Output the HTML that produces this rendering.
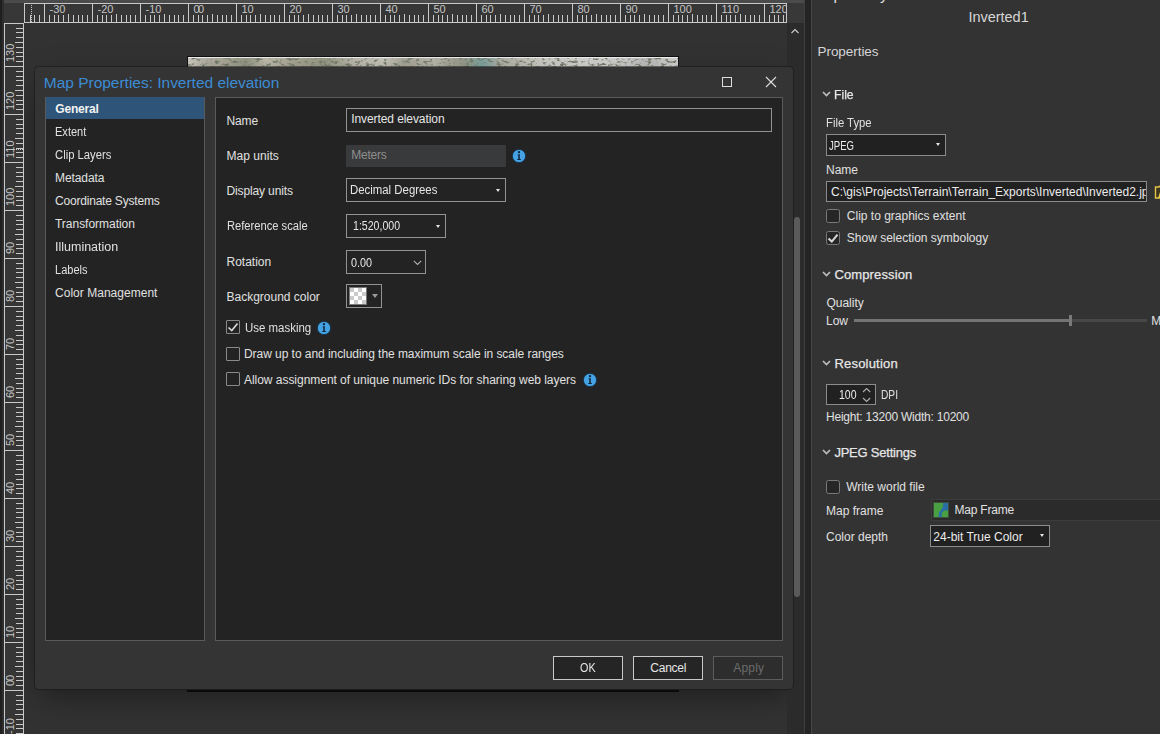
<!DOCTYPE html><html><head><meta charset="utf-8"><style>html,body{margin:0;padding:0;width:1160px;height:734px;overflow:hidden;background:#323232;position:relative}</style></head><body><div style="position:absolute;left:0px;top:0px;width:4px;height:734px;background:#1f1f1f"></div>
<div style="position:absolute;left:2px;top:0px;width:2px;height:734px;background:#2e2e2e"></div>
<div style="position:absolute;left:4px;top:0px;width:801px;height:3px;background:#4b4b4b"></div>
<div style="position:absolute;left:4px;top:3px;width:20px;height:20px;background:#373737"></div>
<svg style="position:absolute;left:24px;top:3px" width="763" height="20" shape-rendering="crispEdges"><rect x="0" y="0" width="763" height="20" fill="#363636"/><rect x="0" y="0" width="763" height="1" fill="#c9c9c9"/><rect x="0" y="19" width="763" height="1" fill="#c9c9c9"/><rect x="0" y="0" width="1" height="20" fill="#c9c9c9"/><rect x="762" y="0" width="1" height="20" fill="#c9c9c9"/><rect x="6" y="12" width="1" height="7" fill="#c9c9c9"/><rect x="10" y="12" width="1" height="7" fill="#c9c9c9"/><rect x="15" y="12" width="1" height="7" fill="#c9c9c9"/><rect x="20" y="0" width="1" height="20" fill="#c9c9c9"/><rect x="25" y="12" width="1" height="7" fill="#c9c9c9"/><rect x="30" y="12" width="1" height="7" fill="#c9c9c9"/><rect x="34" y="12" width="1" height="7" fill="#c9c9c9"/><rect x="39" y="12" width="1" height="7" fill="#c9c9c9"/><rect x="44" y="11" width="1" height="8" fill="#c9c9c9"/><rect x="49" y="12" width="1" height="7" fill="#c9c9c9"/><rect x="54" y="12" width="1" height="7" fill="#c9c9c9"/><rect x="58" y="12" width="1" height="7" fill="#c9c9c9"/><rect x="63" y="12" width="1" height="7" fill="#c9c9c9"/><rect x="68" y="0" width="1" height="20" fill="#c9c9c9"/><rect x="73" y="12" width="1" height="7" fill="#c9c9c9"/><rect x="78" y="12" width="1" height="7" fill="#c9c9c9"/><rect x="82" y="12" width="1" height="7" fill="#c9c9c9"/><rect x="87" y="12" width="1" height="7" fill="#c9c9c9"/><rect x="92" y="11" width="1" height="8" fill="#c9c9c9"/><rect x="97" y="12" width="1" height="7" fill="#c9c9c9"/><rect x="102" y="12" width="1" height="7" fill="#c9c9c9"/><rect x="106" y="12" width="1" height="7" fill="#c9c9c9"/><rect x="111" y="12" width="1" height="7" fill="#c9c9c9"/><rect x="116" y="0" width="1" height="20" fill="#c9c9c9"/><rect x="121" y="12" width="1" height="7" fill="#c9c9c9"/><rect x="126" y="12" width="1" height="7" fill="#c9c9c9"/><rect x="130" y="12" width="1" height="7" fill="#c9c9c9"/><rect x="135" y="12" width="1" height="7" fill="#c9c9c9"/><rect x="140" y="11" width="1" height="8" fill="#c9c9c9"/><rect x="145" y="12" width="1" height="7" fill="#c9c9c9"/><rect x="150" y="12" width="1" height="7" fill="#c9c9c9"/><rect x="154" y="12" width="1" height="7" fill="#c9c9c9"/><rect x="159" y="12" width="1" height="7" fill="#c9c9c9"/><rect x="164" y="0" width="1" height="20" fill="#c9c9c9"/><rect x="169" y="12" width="1" height="7" fill="#c9c9c9"/><rect x="174" y="12" width="1" height="7" fill="#c9c9c9"/><rect x="178" y="12" width="1" height="7" fill="#c9c9c9"/><rect x="183" y="12" width="1" height="7" fill="#c9c9c9"/><rect x="188" y="11" width="1" height="8" fill="#c9c9c9"/><rect x="193" y="12" width="1" height="7" fill="#c9c9c9"/><rect x="198" y="12" width="1" height="7" fill="#c9c9c9"/><rect x="202" y="12" width="1" height="7" fill="#c9c9c9"/><rect x="207" y="12" width="1" height="7" fill="#c9c9c9"/><rect x="212" y="0" width="1" height="20" fill="#c9c9c9"/><rect x="217" y="12" width="1" height="7" fill="#c9c9c9"/><rect x="222" y="12" width="1" height="7" fill="#c9c9c9"/><rect x="226" y="12" width="1" height="7" fill="#c9c9c9"/><rect x="231" y="12" width="1" height="7" fill="#c9c9c9"/><rect x="236" y="11" width="1" height="8" fill="#c9c9c9"/><rect x="241" y="12" width="1" height="7" fill="#c9c9c9"/><rect x="246" y="12" width="1" height="7" fill="#c9c9c9"/><rect x="250" y="12" width="1" height="7" fill="#c9c9c9"/><rect x="255" y="12" width="1" height="7" fill="#c9c9c9"/><rect x="260" y="0" width="1" height="20" fill="#c9c9c9"/><rect x="265" y="12" width="1" height="7" fill="#c9c9c9"/><rect x="270" y="12" width="1" height="7" fill="#c9c9c9"/><rect x="274" y="12" width="1" height="7" fill="#c9c9c9"/><rect x="279" y="12" width="1" height="7" fill="#c9c9c9"/><rect x="284" y="11" width="1" height="8" fill="#c9c9c9"/><rect x="289" y="12" width="1" height="7" fill="#c9c9c9"/><rect x="294" y="12" width="1" height="7" fill="#c9c9c9"/><rect x="298" y="12" width="1" height="7" fill="#c9c9c9"/><rect x="303" y="12" width="1" height="7" fill="#c9c9c9"/><rect x="308" y="0" width="1" height="20" fill="#c9c9c9"/><rect x="313" y="12" width="1" height="7" fill="#c9c9c9"/><rect x="318" y="12" width="1" height="7" fill="#c9c9c9"/><rect x="322" y="12" width="1" height="7" fill="#c9c9c9"/><rect x="327" y="12" width="1" height="7" fill="#c9c9c9"/><rect x="332" y="11" width="1" height="8" fill="#c9c9c9"/><rect x="337" y="12" width="1" height="7" fill="#c9c9c9"/><rect x="342" y="12" width="1" height="7" fill="#c9c9c9"/><rect x="346" y="12" width="1" height="7" fill="#c9c9c9"/><rect x="351" y="12" width="1" height="7" fill="#c9c9c9"/><rect x="356" y="0" width="1" height="20" fill="#c9c9c9"/><rect x="361" y="12" width="1" height="7" fill="#c9c9c9"/><rect x="366" y="12" width="1" height="7" fill="#c9c9c9"/><rect x="370" y="12" width="1" height="7" fill="#c9c9c9"/><rect x="375" y="12" width="1" height="7" fill="#c9c9c9"/><rect x="380" y="11" width="1" height="8" fill="#c9c9c9"/><rect x="385" y="12" width="1" height="7" fill="#c9c9c9"/><rect x="390" y="12" width="1" height="7" fill="#c9c9c9"/><rect x="394" y="12" width="1" height="7" fill="#c9c9c9"/><rect x="399" y="12" width="1" height="7" fill="#c9c9c9"/><rect x="404" y="0" width="1" height="20" fill="#c9c9c9"/><rect x="409" y="12" width="1" height="7" fill="#c9c9c9"/><rect x="414" y="12" width="1" height="7" fill="#c9c9c9"/><rect x="418" y="12" width="1" height="7" fill="#c9c9c9"/><rect x="423" y="12" width="1" height="7" fill="#c9c9c9"/><rect x="428" y="11" width="1" height="8" fill="#c9c9c9"/><rect x="433" y="12" width="1" height="7" fill="#c9c9c9"/><rect x="438" y="12" width="1" height="7" fill="#c9c9c9"/><rect x="442" y="12" width="1" height="7" fill="#c9c9c9"/><rect x="447" y="12" width="1" height="7" fill="#c9c9c9"/><rect x="452" y="0" width="1" height="20" fill="#c9c9c9"/><rect x="457" y="12" width="1" height="7" fill="#c9c9c9"/><rect x="462" y="12" width="1" height="7" fill="#c9c9c9"/><rect x="466" y="12" width="1" height="7" fill="#c9c9c9"/><rect x="471" y="12" width="1" height="7" fill="#c9c9c9"/><rect x="476" y="11" width="1" height="8" fill="#c9c9c9"/><rect x="481" y="12" width="1" height="7" fill="#c9c9c9"/><rect x="486" y="12" width="1" height="7" fill="#c9c9c9"/><rect x="490" y="12" width="1" height="7" fill="#c9c9c9"/><rect x="495" y="12" width="1" height="7" fill="#c9c9c9"/><rect x="500" y="0" width="1" height="20" fill="#c9c9c9"/><rect x="505" y="12" width="1" height="7" fill="#c9c9c9"/><rect x="510" y="12" width="1" height="7" fill="#c9c9c9"/><rect x="514" y="12" width="1" height="7" fill="#c9c9c9"/><rect x="519" y="12" width="1" height="7" fill="#c9c9c9"/><rect x="524" y="11" width="1" height="8" fill="#c9c9c9"/><rect x="529" y="12" width="1" height="7" fill="#c9c9c9"/><rect x="534" y="12" width="1" height="7" fill="#c9c9c9"/><rect x="538" y="12" width="1" height="7" fill="#c9c9c9"/><rect x="543" y="12" width="1" height="7" fill="#c9c9c9"/><rect x="548" y="0" width="1" height="20" fill="#c9c9c9"/><rect x="553" y="12" width="1" height="7" fill="#c9c9c9"/><rect x="558" y="12" width="1" height="7" fill="#c9c9c9"/><rect x="562" y="12" width="1" height="7" fill="#c9c9c9"/><rect x="567" y="12" width="1" height="7" fill="#c9c9c9"/><rect x="572" y="11" width="1" height="8" fill="#c9c9c9"/><rect x="577" y="12" width="1" height="7" fill="#c9c9c9"/><rect x="582" y="12" width="1" height="7" fill="#c9c9c9"/><rect x="586" y="12" width="1" height="7" fill="#c9c9c9"/><rect x="591" y="12" width="1" height="7" fill="#c9c9c9"/><rect x="596" y="0" width="1" height="20" fill="#c9c9c9"/><rect x="601" y="12" width="1" height="7" fill="#c9c9c9"/><rect x="606" y="12" width="1" height="7" fill="#c9c9c9"/><rect x="610" y="12" width="1" height="7" fill="#c9c9c9"/><rect x="615" y="12" width="1" height="7" fill="#c9c9c9"/><rect x="620" y="11" width="1" height="8" fill="#c9c9c9"/><rect x="625" y="12" width="1" height="7" fill="#c9c9c9"/><rect x="630" y="12" width="1" height="7" fill="#c9c9c9"/><rect x="634" y="12" width="1" height="7" fill="#c9c9c9"/><rect x="639" y="12" width="1" height="7" fill="#c9c9c9"/><rect x="644" y="0" width="1" height="20" fill="#c9c9c9"/><rect x="649" y="12" width="1" height="7" fill="#c9c9c9"/><rect x="654" y="12" width="1" height="7" fill="#c9c9c9"/><rect x="658" y="12" width="1" height="7" fill="#c9c9c9"/><rect x="663" y="12" width="1" height="7" fill="#c9c9c9"/><rect x="668" y="11" width="1" height="8" fill="#c9c9c9"/><rect x="673" y="12" width="1" height="7" fill="#c9c9c9"/><rect x="678" y="12" width="1" height="7" fill="#c9c9c9"/><rect x="682" y="12" width="1" height="7" fill="#c9c9c9"/><rect x="687" y="12" width="1" height="7" fill="#c9c9c9"/><rect x="692" y="0" width="1" height="20" fill="#c9c9c9"/><rect x="697" y="12" width="1" height="7" fill="#c9c9c9"/><rect x="702" y="12" width="1" height="7" fill="#c9c9c9"/><rect x="706" y="12" width="1" height="7" fill="#c9c9c9"/><rect x="711" y="12" width="1" height="7" fill="#c9c9c9"/><rect x="716" y="11" width="1" height="8" fill="#c9c9c9"/><rect x="721" y="12" width="1" height="7" fill="#c9c9c9"/><rect x="726" y="12" width="1" height="7" fill="#c9c9c9"/><rect x="730" y="12" width="1" height="7" fill="#c9c9c9"/><rect x="735" y="12" width="1" height="7" fill="#c9c9c9"/><rect x="740" y="0" width="1" height="20" fill="#c9c9c9"/><rect x="745" y="12" width="1" height="7" fill="#c9c9c9"/><rect x="750" y="12" width="1" height="7" fill="#c9c9c9"/><rect x="754" y="12" width="1" height="7" fill="#c9c9c9"/><rect x="759" y="12" width="1" height="7" fill="#c9c9c9"/><rect x="7" y="2" width="1" height="1" fill="#c9c9c9"/><rect x="7" y="4" width="1" height="1" fill="#c9c9c9"/><rect x="7" y="6" width="1" height="1" fill="#c9c9c9"/><rect x="7" y="8" width="1" height="1" fill="#c9c9c9"/><rect x="7" y="10" width="1" height="1" fill="#c9c9c9"/><rect x="7" y="12" width="1" height="1" fill="#c9c9c9"/><rect x="7" y="14" width="1" height="1" fill="#c9c9c9"/><rect x="7" y="16" width="1" height="1" fill="#c9c9c9"/><rect x="7" y="18" width="1" height="1" fill="#c9c9c9"/></svg>
<div style="position:absolute;left:49.5px;top:4.0px;font-family:'Liberation Sans', sans-serif;font-size:11px;font-weight:normal;white-space:nowrap;line-height:11px;color:#c4c4c4;letter-spacing:0.000px;">-30</div>
<div style="position:absolute;left:97.5px;top:4.0px;font-family:'Liberation Sans', sans-serif;font-size:11px;font-weight:normal;white-space:nowrap;line-height:11px;color:#c4c4c4;letter-spacing:0.000px;">-20</div>
<div style="position:absolute;left:145.5px;top:4.0px;font-family:'Liberation Sans', sans-serif;font-size:11px;font-weight:normal;white-space:nowrap;line-height:11px;color:#c4c4c4;letter-spacing:0.000px;">-10</div>
<div style="position:absolute;left:193.5px;top:4.0px;font-family:'Liberation Sans', sans-serif;font-size:11px;font-weight:normal;white-space:nowrap;line-height:11px;color:#c4c4c4;letter-spacing:0.000px;">0</div>
<div style="position:absolute;left:198.1px;top:4.0px;font-family:'Liberation Sans', sans-serif;font-size:11px;font-weight:normal;white-space:nowrap;line-height:11px;color:#c4c4c4;letter-spacing:0.000px;">0</div>
<div style="position:absolute;left:241.5px;top:4.0px;font-family:'Liberation Sans', sans-serif;font-size:11px;font-weight:normal;white-space:nowrap;line-height:11px;color:#c4c4c4;letter-spacing:0.000px;">10</div>
<div style="position:absolute;left:289.5px;top:4.0px;font-family:'Liberation Sans', sans-serif;font-size:11px;font-weight:normal;white-space:nowrap;line-height:11px;color:#c4c4c4;letter-spacing:0.000px;">20</div>
<div style="position:absolute;left:337.5px;top:4.0px;font-family:'Liberation Sans', sans-serif;font-size:11px;font-weight:normal;white-space:nowrap;line-height:11px;color:#c4c4c4;letter-spacing:0.000px;">30</div>
<div style="position:absolute;left:385.5px;top:4.0px;font-family:'Liberation Sans', sans-serif;font-size:11px;font-weight:normal;white-space:nowrap;line-height:11px;color:#c4c4c4;letter-spacing:0.000px;">40</div>
<div style="position:absolute;left:433.5px;top:4.0px;font-family:'Liberation Sans', sans-serif;font-size:11px;font-weight:normal;white-space:nowrap;line-height:11px;color:#c4c4c4;letter-spacing:0.000px;">50</div>
<div style="position:absolute;left:481.5px;top:4.0px;font-family:'Liberation Sans', sans-serif;font-size:11px;font-weight:normal;white-space:nowrap;line-height:11px;color:#c4c4c4;letter-spacing:0.000px;">60</div>
<div style="position:absolute;left:529.5px;top:4.0px;font-family:'Liberation Sans', sans-serif;font-size:11px;font-weight:normal;white-space:nowrap;line-height:11px;color:#c4c4c4;letter-spacing:0.000px;">70</div>
<div style="position:absolute;left:577.5px;top:4.0px;font-family:'Liberation Sans', sans-serif;font-size:11px;font-weight:normal;white-space:nowrap;line-height:11px;color:#c4c4c4;letter-spacing:0.000px;">80</div>
<div style="position:absolute;left:625.5px;top:4.0px;font-family:'Liberation Sans', sans-serif;font-size:11px;font-weight:normal;white-space:nowrap;line-height:11px;color:#c4c4c4;letter-spacing:0.000px;">90</div>
<div style="position:absolute;left:673.5px;top:4.0px;font-family:'Liberation Sans', sans-serif;font-size:11px;font-weight:normal;white-space:nowrap;line-height:11px;color:#c4c4c4;letter-spacing:0.000px;">100</div>
<div style="position:absolute;left:721.5px;top:4.0px;font-family:'Liberation Sans', sans-serif;font-size:11px;font-weight:normal;white-space:nowrap;line-height:11px;color:#c4c4c4;letter-spacing:0.000px;">110</div>
<div style="position:absolute;left:769.5px;top:4.0px;font-family:'Liberation Sans', sans-serif;font-size:11px;font-weight:normal;white-space:nowrap;line-height:11px;color:#c4c4c4;letter-spacing:0.000px;">120</div>
<svg style="position:absolute;left:4px;top:23px" width="20" height="711" shape-rendering="crispEdges"><rect x="0" y="0" width="20" height="711" fill="#363636"/><rect x="0" y="0" width="1" height="711" fill="#c9c9c9"/><rect x="19" y="0" width="1" height="711" fill="#c9c9c9"/><rect x="0" y="0" width="20" height="1" fill="#c9c9c9"/><rect x="12" y="710" width="7" height="1" fill="#c9c9c9"/><rect x="12" y="705" width="7" height="1" fill="#c9c9c9"/><rect x="12" y="701" width="7" height="1" fill="#c9c9c9"/><rect x="12" y="696" width="7" height="1" fill="#c9c9c9"/><rect x="11" y="691" width="8" height="1" fill="#c9c9c9"/><rect x="12" y="686" width="7" height="1" fill="#c9c9c9"/><rect x="12" y="681" width="7" height="1" fill="#c9c9c9"/><rect x="12" y="677" width="7" height="1" fill="#c9c9c9"/><rect x="12" y="672" width="7" height="1" fill="#c9c9c9"/><rect x="0" y="667" width="20" height="1" fill="#c9c9c9"/><rect x="12" y="662" width="7" height="1" fill="#c9c9c9"/><rect x="12" y="657" width="7" height="1" fill="#c9c9c9"/><rect x="12" y="653" width="7" height="1" fill="#c9c9c9"/><rect x="12" y="648" width="7" height="1" fill="#c9c9c9"/><rect x="11" y="643" width="8" height="1" fill="#c9c9c9"/><rect x="12" y="638" width="7" height="1" fill="#c9c9c9"/><rect x="12" y="633" width="7" height="1" fill="#c9c9c9"/><rect x="12" y="629" width="7" height="1" fill="#c9c9c9"/><rect x="12" y="624" width="7" height="1" fill="#c9c9c9"/><rect x="0" y="619" width="20" height="1" fill="#c9c9c9"/><rect x="12" y="614" width="7" height="1" fill="#c9c9c9"/><rect x="12" y="609" width="7" height="1" fill="#c9c9c9"/><rect x="12" y="605" width="7" height="1" fill="#c9c9c9"/><rect x="12" y="600" width="7" height="1" fill="#c9c9c9"/><rect x="11" y="595" width="8" height="1" fill="#c9c9c9"/><rect x="12" y="590" width="7" height="1" fill="#c9c9c9"/><rect x="12" y="585" width="7" height="1" fill="#c9c9c9"/><rect x="12" y="581" width="7" height="1" fill="#c9c9c9"/><rect x="12" y="576" width="7" height="1" fill="#c9c9c9"/><rect x="0" y="571" width="20" height="1" fill="#c9c9c9"/><rect x="12" y="566" width="7" height="1" fill="#c9c9c9"/><rect x="12" y="561" width="7" height="1" fill="#c9c9c9"/><rect x="12" y="557" width="7" height="1" fill="#c9c9c9"/><rect x="12" y="552" width="7" height="1" fill="#c9c9c9"/><rect x="11" y="547" width="8" height="1" fill="#c9c9c9"/><rect x="12" y="542" width="7" height="1" fill="#c9c9c9"/><rect x="12" y="537" width="7" height="1" fill="#c9c9c9"/><rect x="12" y="533" width="7" height="1" fill="#c9c9c9"/><rect x="12" y="528" width="7" height="1" fill="#c9c9c9"/><rect x="0" y="523" width="20" height="1" fill="#c9c9c9"/><rect x="12" y="518" width="7" height="1" fill="#c9c9c9"/><rect x="12" y="513" width="7" height="1" fill="#c9c9c9"/><rect x="12" y="509" width="7" height="1" fill="#c9c9c9"/><rect x="12" y="504" width="7" height="1" fill="#c9c9c9"/><rect x="11" y="499" width="8" height="1" fill="#c9c9c9"/><rect x="12" y="494" width="7" height="1" fill="#c9c9c9"/><rect x="12" y="489" width="7" height="1" fill="#c9c9c9"/><rect x="12" y="485" width="7" height="1" fill="#c9c9c9"/><rect x="12" y="480" width="7" height="1" fill="#c9c9c9"/><rect x="0" y="475" width="20" height="1" fill="#c9c9c9"/><rect x="12" y="470" width="7" height="1" fill="#c9c9c9"/><rect x="12" y="465" width="7" height="1" fill="#c9c9c9"/><rect x="12" y="461" width="7" height="1" fill="#c9c9c9"/><rect x="12" y="456" width="7" height="1" fill="#c9c9c9"/><rect x="11" y="451" width="8" height="1" fill="#c9c9c9"/><rect x="12" y="446" width="7" height="1" fill="#c9c9c9"/><rect x="12" y="441" width="7" height="1" fill="#c9c9c9"/><rect x="12" y="437" width="7" height="1" fill="#c9c9c9"/><rect x="12" y="432" width="7" height="1" fill="#c9c9c9"/><rect x="0" y="427" width="20" height="1" fill="#c9c9c9"/><rect x="12" y="422" width="7" height="1" fill="#c9c9c9"/><rect x="12" y="417" width="7" height="1" fill="#c9c9c9"/><rect x="12" y="413" width="7" height="1" fill="#c9c9c9"/><rect x="12" y="408" width="7" height="1" fill="#c9c9c9"/><rect x="11" y="403" width="8" height="1" fill="#c9c9c9"/><rect x="12" y="398" width="7" height="1" fill="#c9c9c9"/><rect x="12" y="393" width="7" height="1" fill="#c9c9c9"/><rect x="12" y="389" width="7" height="1" fill="#c9c9c9"/><rect x="12" y="384" width="7" height="1" fill="#c9c9c9"/><rect x="0" y="379" width="20" height="1" fill="#c9c9c9"/><rect x="12" y="374" width="7" height="1" fill="#c9c9c9"/><rect x="12" y="369" width="7" height="1" fill="#c9c9c9"/><rect x="12" y="365" width="7" height="1" fill="#c9c9c9"/><rect x="12" y="360" width="7" height="1" fill="#c9c9c9"/><rect x="11" y="355" width="8" height="1" fill="#c9c9c9"/><rect x="12" y="350" width="7" height="1" fill="#c9c9c9"/><rect x="12" y="345" width="7" height="1" fill="#c9c9c9"/><rect x="12" y="341" width="7" height="1" fill="#c9c9c9"/><rect x="12" y="336" width="7" height="1" fill="#c9c9c9"/><rect x="0" y="331" width="20" height="1" fill="#c9c9c9"/><rect x="12" y="326" width="7" height="1" fill="#c9c9c9"/><rect x="12" y="321" width="7" height="1" fill="#c9c9c9"/><rect x="12" y="317" width="7" height="1" fill="#c9c9c9"/><rect x="12" y="312" width="7" height="1" fill="#c9c9c9"/><rect x="11" y="307" width="8" height="1" fill="#c9c9c9"/><rect x="12" y="302" width="7" height="1" fill="#c9c9c9"/><rect x="12" y="297" width="7" height="1" fill="#c9c9c9"/><rect x="12" y="293" width="7" height="1" fill="#c9c9c9"/><rect x="12" y="288" width="7" height="1" fill="#c9c9c9"/><rect x="0" y="283" width="20" height="1" fill="#c9c9c9"/><rect x="12" y="278" width="7" height="1" fill="#c9c9c9"/><rect x="12" y="273" width="7" height="1" fill="#c9c9c9"/><rect x="12" y="269" width="7" height="1" fill="#c9c9c9"/><rect x="12" y="264" width="7" height="1" fill="#c9c9c9"/><rect x="11" y="259" width="8" height="1" fill="#c9c9c9"/><rect x="12" y="254" width="7" height="1" fill="#c9c9c9"/><rect x="12" y="249" width="7" height="1" fill="#c9c9c9"/><rect x="12" y="245" width="7" height="1" fill="#c9c9c9"/><rect x="12" y="240" width="7" height="1" fill="#c9c9c9"/><rect x="0" y="235" width="20" height="1" fill="#c9c9c9"/><rect x="12" y="230" width="7" height="1" fill="#c9c9c9"/><rect x="12" y="225" width="7" height="1" fill="#c9c9c9"/><rect x="12" y="221" width="7" height="1" fill="#c9c9c9"/><rect x="12" y="216" width="7" height="1" fill="#c9c9c9"/><rect x="11" y="211" width="8" height="1" fill="#c9c9c9"/><rect x="12" y="206" width="7" height="1" fill="#c9c9c9"/><rect x="12" y="201" width="7" height="1" fill="#c9c9c9"/><rect x="12" y="197" width="7" height="1" fill="#c9c9c9"/><rect x="12" y="192" width="7" height="1" fill="#c9c9c9"/><rect x="0" y="187" width="20" height="1" fill="#c9c9c9"/><rect x="12" y="182" width="7" height="1" fill="#c9c9c9"/><rect x="12" y="177" width="7" height="1" fill="#c9c9c9"/><rect x="12" y="173" width="7" height="1" fill="#c9c9c9"/><rect x="12" y="168" width="7" height="1" fill="#c9c9c9"/><rect x="11" y="163" width="8" height="1" fill="#c9c9c9"/><rect x="12" y="158" width="7" height="1" fill="#c9c9c9"/><rect x="12" y="153" width="7" height="1" fill="#c9c9c9"/><rect x="12" y="149" width="7" height="1" fill="#c9c9c9"/><rect x="12" y="144" width="7" height="1" fill="#c9c9c9"/><rect x="0" y="139" width="20" height="1" fill="#c9c9c9"/><rect x="12" y="134" width="7" height="1" fill="#c9c9c9"/><rect x="12" y="129" width="7" height="1" fill="#c9c9c9"/><rect x="12" y="125" width="7" height="1" fill="#c9c9c9"/><rect x="12" y="120" width="7" height="1" fill="#c9c9c9"/><rect x="11" y="115" width="8" height="1" fill="#c9c9c9"/><rect x="12" y="110" width="7" height="1" fill="#c9c9c9"/><rect x="12" y="105" width="7" height="1" fill="#c9c9c9"/><rect x="12" y="101" width="7" height="1" fill="#c9c9c9"/><rect x="12" y="96" width="7" height="1" fill="#c9c9c9"/><rect x="0" y="91" width="20" height="1" fill="#c9c9c9"/><rect x="12" y="86" width="7" height="1" fill="#c9c9c9"/><rect x="12" y="81" width="7" height="1" fill="#c9c9c9"/><rect x="12" y="77" width="7" height="1" fill="#c9c9c9"/><rect x="12" y="72" width="7" height="1" fill="#c9c9c9"/><rect x="11" y="67" width="8" height="1" fill="#c9c9c9"/><rect x="12" y="62" width="7" height="1" fill="#c9c9c9"/><rect x="12" y="57" width="7" height="1" fill="#c9c9c9"/><rect x="12" y="53" width="7" height="1" fill="#c9c9c9"/><rect x="12" y="48" width="7" height="1" fill="#c9c9c9"/><rect x="0" y="43" width="20" height="1" fill="#c9c9c9"/><rect x="12" y="38" width="7" height="1" fill="#c9c9c9"/><rect x="12" y="33" width="7" height="1" fill="#c9c9c9"/><rect x="12" y="29" width="7" height="1" fill="#c9c9c9"/><rect x="12" y="24" width="7" height="1" fill="#c9c9c9"/><rect x="11" y="19" width="8" height="1" fill="#c9c9c9"/><rect x="12" y="14" width="7" height="1" fill="#c9c9c9"/><rect x="12" y="9" width="7" height="1" fill="#c9c9c9"/><rect x="12" y="5" width="7" height="1" fill="#c9c9c9"/><rect x="2" y="126" width="1" height="1" fill="#c9c9c9"/><rect x="4" y="126" width="1" height="1" fill="#c9c9c9"/><rect x="6" y="126" width="1" height="1" fill="#c9c9c9"/><rect x="8" y="126" width="1" height="1" fill="#c9c9c9"/><rect x="10" y="126" width="1" height="1" fill="#c9c9c9"/><rect x="12" y="126" width="1" height="1" fill="#c9c9c9"/><rect x="14" y="126" width="1" height="1" fill="#c9c9c9"/><rect x="16" y="126" width="1" height="1" fill="#c9c9c9"/><rect x="18" y="126" width="1" height="1" fill="#c9c9c9"/></svg>
<div style="position:absolute;left:14px;top:734.0px;width:0;height:0;"><div style="position:absolute;left:0;top:0;transform:rotate(-90deg);transform-origin:0 0;font-family:'Liberation Sans', sans-serif;font-size:11px;line-height:11px;color:#c4c4c4;white-space:nowrap;margin-top:0"><span style="position:relative;top:-9px">-10</span></div></div>
<div style="position:absolute;left:14px;top:686.0px;width:0;height:0;"><div style="position:absolute;left:0;top:0;transform:rotate(-90deg);transform-origin:0 0;font-family:'Liberation Sans', sans-serif;font-size:11px;line-height:11px;color:#c4c4c4;white-space:nowrap;margin-top:0"><span style="position:relative;top:-9px">0</span></div></div>
<div style="position:absolute;left:14px;top:681.4px;width:0;height:0;"><div style="position:absolute;left:0;top:0;transform:rotate(-90deg);transform-origin:0 0;font-family:'Liberation Sans', sans-serif;font-size:11px;line-height:11px;color:#c4c4c4;white-space:nowrap;margin-top:0"><span style="position:relative;top:-9px">0</span></div></div>
<div style="position:absolute;left:14px;top:638.0px;width:0;height:0;"><div style="position:absolute;left:0;top:0;transform:rotate(-90deg);transform-origin:0 0;font-family:'Liberation Sans', sans-serif;font-size:11px;line-height:11px;color:#c4c4c4;white-space:nowrap;margin-top:0"><span style="position:relative;top:-9px">10</span></div></div>
<div style="position:absolute;left:14px;top:590.0px;width:0;height:0;"><div style="position:absolute;left:0;top:0;transform:rotate(-90deg);transform-origin:0 0;font-family:'Liberation Sans', sans-serif;font-size:11px;line-height:11px;color:#c4c4c4;white-space:nowrap;margin-top:0"><span style="position:relative;top:-9px">20</span></div></div>
<div style="position:absolute;left:14px;top:542.0px;width:0;height:0;"><div style="position:absolute;left:0;top:0;transform:rotate(-90deg);transform-origin:0 0;font-family:'Liberation Sans', sans-serif;font-size:11px;line-height:11px;color:#c4c4c4;white-space:nowrap;margin-top:0"><span style="position:relative;top:-9px">30</span></div></div>
<div style="position:absolute;left:14px;top:494.0px;width:0;height:0;"><div style="position:absolute;left:0;top:0;transform:rotate(-90deg);transform-origin:0 0;font-family:'Liberation Sans', sans-serif;font-size:11px;line-height:11px;color:#c4c4c4;white-space:nowrap;margin-top:0"><span style="position:relative;top:-9px">40</span></div></div>
<div style="position:absolute;left:14px;top:446.0px;width:0;height:0;"><div style="position:absolute;left:0;top:0;transform:rotate(-90deg);transform-origin:0 0;font-family:'Liberation Sans', sans-serif;font-size:11px;line-height:11px;color:#c4c4c4;white-space:nowrap;margin-top:0"><span style="position:relative;top:-9px">50</span></div></div>
<div style="position:absolute;left:14px;top:398.0px;width:0;height:0;"><div style="position:absolute;left:0;top:0;transform:rotate(-90deg);transform-origin:0 0;font-family:'Liberation Sans', sans-serif;font-size:11px;line-height:11px;color:#c4c4c4;white-space:nowrap;margin-top:0"><span style="position:relative;top:-9px">60</span></div></div>
<div style="position:absolute;left:14px;top:350.0px;width:0;height:0;"><div style="position:absolute;left:0;top:0;transform:rotate(-90deg);transform-origin:0 0;font-family:'Liberation Sans', sans-serif;font-size:11px;line-height:11px;color:#c4c4c4;white-space:nowrap;margin-top:0"><span style="position:relative;top:-9px">70</span></div></div>
<div style="position:absolute;left:14px;top:302.0px;width:0;height:0;"><div style="position:absolute;left:0;top:0;transform:rotate(-90deg);transform-origin:0 0;font-family:'Liberation Sans', sans-serif;font-size:11px;line-height:11px;color:#c4c4c4;white-space:nowrap;margin-top:0"><span style="position:relative;top:-9px">80</span></div></div>
<div style="position:absolute;left:14px;top:254.0px;width:0;height:0;"><div style="position:absolute;left:0;top:0;transform:rotate(-90deg);transform-origin:0 0;font-family:'Liberation Sans', sans-serif;font-size:11px;line-height:11px;color:#c4c4c4;white-space:nowrap;margin-top:0"><span style="position:relative;top:-9px">90</span></div></div>
<div style="position:absolute;left:14px;top:206.0px;width:0;height:0;"><div style="position:absolute;left:0;top:0;transform:rotate(-90deg);transform-origin:0 0;font-family:'Liberation Sans', sans-serif;font-size:11px;line-height:11px;color:#c4c4c4;white-space:nowrap;margin-top:0"><span style="position:relative;top:-9px">100</span></div></div>
<div style="position:absolute;left:14px;top:158.0px;width:0;height:0;"><div style="position:absolute;left:0;top:0;transform:rotate(-90deg);transform-origin:0 0;font-family:'Liberation Sans', sans-serif;font-size:11px;line-height:11px;color:#c4c4c4;white-space:nowrap;margin-top:0"><span style="position:relative;top:-9px">110</span></div></div>
<div style="position:absolute;left:14px;top:110.0px;width:0;height:0;"><div style="position:absolute;left:0;top:0;transform:rotate(-90deg);transform-origin:0 0;font-family:'Liberation Sans', sans-serif;font-size:11px;line-height:11px;color:#c4c4c4;white-space:nowrap;margin-top:0"><span style="position:relative;top:-9px">120</span></div></div>
<div style="position:absolute;left:14px;top:62.0px;width:0;height:0;"><div style="position:absolute;left:0;top:0;transform:rotate(-90deg);transform-origin:0 0;font-family:'Liberation Sans', sans-serif;font-size:11px;line-height:11px;color:#c4c4c4;white-space:nowrap;margin-top:0"><span style="position:relative;top:-9px">130</span></div></div>
<div style="position:absolute;left:787px;top:3px;width:18px;height:20px;background:#383838"></div>
<div style="position:absolute;left:787px;top:23px;width:17px;height:711px;background:#2b2b2b"></div>
<svg style="position:absolute;left:790px;top:27px" width="10" height="8"><polyline points="1.5,6 5,2.5 8.5,6" fill="none" stroke="#cfcfcf" stroke-width="1.1"/></svg>
<div style="position:absolute;left:794px;top:217px;width:6px;height:380px;background:#5a5a5a;border-radius:3px"></div>
<div style="position:absolute;left:804px;top:0px;width:1px;height:734px;background:#3e3e3e"></div>
<div style="position:absolute;left:805px;top:0px;width:6px;height:734px;background:#242424"></div>
<div style="position:absolute;left:811px;top:0px;width:1px;height:734px;background:#474747"></div>
<div style="position:absolute;left:187px;top:56px;width:492px;height:11px;background:#111"></div>
<div style="position:absolute;left:188px;top:57px;width:490px;height:10px;background:#f0f0f0"></div>
<div style="position:absolute;left:188px;top:58px;width:490px;height:9px;background:linear-gradient(90deg,#cfccc4 0%,#b3b0a3 4%,#a9a795 8%,#979a86 12%,#c0bdae 16%,#a7a592 22%,#999b86 28%,#bdbaad 34%,#c9c7bc 40%,#a9a798 44%,#bbb9ad 50%,#9a9c8c 56%,#7fa5a0 60%,#b3b2a8 64%,#cdccc6 72%,#d4d4d2 80%,#cfcfcd 88%,#bdbdbb 94%,#d6d6d5 100%)"></div>
<svg style="position:absolute;left:188px;top:58px" width="490" height="9"><filter id="nz" x="0" y="0" width="100%" height="100%"><feTurbulence type="fractalNoise" baseFrequency="0.22 0.35" numOctaves="3" seed="11"/><feColorMatrix values="0 0 0 0 0.18  0 0 0 0 0.2  0 0 0 0 0.15  -4.5 0 0 0 2.15"/></filter><rect width="490" height="9" filter="url(#nz)"/></svg>
<div style="position:absolute;left:187px;top:690px;width:492px;height:2px;background:#0e0e0e"></div>
<div style="position:absolute;left:24px;top:23px;width:763px;height:711px;overflow:hidden"><div style="position:absolute;left:11px;top:44px;width:758px;height:622px;background:#343434;border-radius:4px;box-shadow:0 10px 30px -4px rgba(0,0,0,0.42)"></div></div>
<div style="position:absolute;left:35px;top:67px;width:758px;height:622px;background:#343434;border-radius:4px;box-shadow:0 0 0 1px rgba(20,20,20,0.5)"></div>
<div style="position:absolute;left:43.8px;top:75.0px;font-family:'Liberation Sans', sans-serif;font-size:15.5px;font-weight:normal;white-space:nowrap;line-height:15.5px;color:#3c8cd5;letter-spacing:-0.017px;">Map Properties: Inverted elevation</div>
<div style="position:absolute;left:722px;top:77px;width:8px;height:8px;border:1px solid #dedede"></div>
<svg style="position:absolute;left:765px;top:76px" width="12" height="12"><path d="M1,1 L11,11 M11,1 L1,11" stroke="#dedede" stroke-width="1.1"/></svg>
<div style="position:absolute;left:45px;top:97px;width:160px;height:544px;background:#232323;box-sizing:border-box;border:1px solid #5a5a5a"></div>
<div style="position:absolute;left:46px;top:97px;width:158px;height:22px;background:#2e5479"></div>
<div style="position:absolute;left:55.3px;top:103.0px;font-family:'Liberation Sans', sans-serif;font-size:12px;font-weight:bold;white-space:nowrap;line-height:12px;color:#f2f2f2;letter-spacing:-0.200px;">General</div>
<div style="position:absolute;left:55px;top:126.0px;font-family:'Liberation Sans', sans-serif;font-size:12px;font-weight:normal;white-space:nowrap;line-height:12px;color:#e0e0e0;letter-spacing:0.000px;transform:scaleX(0.9197);transform-origin:0 0;">Extent</div>
<div style="position:absolute;left:55px;top:149.0px;font-family:'Liberation Sans', sans-serif;font-size:12px;font-weight:normal;white-space:nowrap;line-height:12px;color:#e0e0e0;letter-spacing:0.000px;transform:scaleX(0.9378);transform-origin:0 0;">Clip Layers</div>
<div style="position:absolute;left:55px;top:172.0px;font-family:'Liberation Sans', sans-serif;font-size:12px;font-weight:normal;white-space:nowrap;line-height:12px;color:#e0e0e0;letter-spacing:-0.093px;">Metadata</div>
<div style="position:absolute;left:55px;top:195.0px;font-family:'Liberation Sans', sans-serif;font-size:12px;font-weight:normal;white-space:nowrap;line-height:12px;color:#e0e0e0;letter-spacing:-0.197px;">Coordinate Systems</div>
<div style="position:absolute;left:55px;top:218.0px;font-family:'Liberation Sans', sans-serif;font-size:12px;font-weight:normal;white-space:nowrap;line-height:12px;color:#e0e0e0;letter-spacing:-0.025px;">Transformation</div>
<div style="position:absolute;left:55px;top:241.0px;font-family:'Liberation Sans', sans-serif;font-size:12px;font-weight:normal;white-space:nowrap;line-height:12px;color:#e0e0e0;letter-spacing:0.000px;transform:scaleX(1.0411);transform-origin:0 0;">Illumination</div>
<div style="position:absolute;left:55px;top:264.0px;font-family:'Liberation Sans', sans-serif;font-size:12px;font-weight:normal;white-space:nowrap;line-height:12px;color:#e0e0e0;letter-spacing:0.000px;transform:scaleX(0.9187);transform-origin:0 0;">Labels</div>
<div style="position:absolute;left:55px;top:287.0px;font-family:'Liberation Sans', sans-serif;font-size:12px;font-weight:normal;white-space:nowrap;line-height:12px;color:#e0e0e0;letter-spacing:0.027px;">Color Management</div>
<div style="position:absolute;left:215px;top:97px;width:568px;height:544px;background:#232323;box-sizing:border-box;border:1px solid #5a5a5a"></div>
<div style="position:absolute;left:226.5px;top:115.0px;font-family:'Liberation Sans', sans-serif;font-size:12px;font-weight:normal;white-space:nowrap;line-height:12px;color:#e0e0e0;letter-spacing:-0.129px;">Name</div>
<div style="position:absolute;left:346px;top:108px;width:426px;height:24px;background:#232323;box-sizing:border-box;border:1px solid #939393"></div>
<div style="position:absolute;left:351.2px;top:113.0px;font-family:'Liberation Sans', sans-serif;font-size:12px;font-weight:normal;white-space:nowrap;line-height:12px;color:#e6e6e6;letter-spacing:-0.080px;">Inverted elevation</div>
<div style="position:absolute;left:226.5px;top:149.5px;font-family:'Liberation Sans', sans-serif;font-size:12px;font-weight:normal;white-space:nowrap;line-height:12px;color:#e0e0e0;letter-spacing:0.030px;">Map units</div>
<div style="position:absolute;left:346px;top:145px;width:160px;height:22px;background:#393a3b"></div>
<div style="position:absolute;left:351.2px;top:148.5px;font-family:'Liberation Sans', sans-serif;font-size:12px;font-weight:normal;white-space:nowrap;line-height:12px;color:#8e8e8e;letter-spacing:-0.215px;">Meters</div>
<svg style="position:absolute;left:511.4px;top:148.4px" width="16" height="16" viewBox="0 0 16 16"><circle cx="8" cy="8" r="6.6" fill="#45a3e3" stroke="#15324d" stroke-width="0.9"/><circle cx="8" cy="4.2" r="1.15" fill="#10243a"/><path d="M6.7,6.3 H8.8 V11 H9.8 V12.1 H6.3 V11 H7.3 V7.3 H6.7 Z" fill="#10243a"/></svg>
<div style="position:absolute;left:226.5px;top:184.5px;font-family:'Liberation Sans', sans-serif;font-size:12px;font-weight:normal;white-space:nowrap;line-height:12px;color:#e0e0e0;letter-spacing:-0.133px;">Display units</div>
<div style="position:absolute;left:346px;top:178px;width:160px;height:24px;background:#232323;box-sizing:border-box;border:1px solid #939393"></div>
<div style="position:absolute;left:349.6px;top:184.0px;font-family:'Liberation Sans', sans-serif;font-size:12px;font-weight:normal;white-space:nowrap;line-height:12px;color:#e6e6e6;letter-spacing:0.000px;transform:scaleX(0.9495);transform-origin:0 0;">Decimal Degrees</div>
<div style="position:absolute;left:496.1px;top:189px;width:0;height:0;border-left:2.5px solid transparent;border-right:2.5px solid transparent;border-top:3px solid #e6e6e6"></div>
<div style="position:absolute;left:226.5px;top:220.3px;font-family:'Liberation Sans', sans-serif;font-size:12px;font-weight:normal;white-space:nowrap;line-height:12px;color:#e0e0e0;letter-spacing:0.000px;transform:scaleX(0.9294);transform-origin:0 0;">Reference scale</div>
<div style="position:absolute;left:346px;top:214px;width:100px;height:24px;background:#232323;box-sizing:border-box;border:1px solid #939393"></div>
<div style="position:absolute;left:352.7px;top:220.0px;font-family:'Liberation Sans', sans-serif;font-size:12px;font-weight:normal;white-space:nowrap;line-height:12px;color:#e6e6e6;letter-spacing:0.000px;transform:scaleX(0.8822);transform-origin:0 0;">1:520,000</div>
<div style="position:absolute;left:436.3px;top:225px;width:0;height:0;border-left:2.5px solid transparent;border-right:2.5px solid transparent;border-top:3px solid #e6e6e6"></div>
<div style="position:absolute;left:226.5px;top:255.8px;font-family:'Liberation Sans', sans-serif;font-size:12px;font-weight:normal;white-space:nowrap;line-height:12px;color:#e0e0e0;letter-spacing:0.000px;">Rotation</div>
<div style="position:absolute;left:346px;top:250px;width:80px;height:24px;background:#232323;box-sizing:border-box;border:1px solid #939393"></div>
<div style="position:absolute;left:351.2px;top:257.0px;font-family:'Liberation Sans', sans-serif;font-size:12px;font-weight:normal;white-space:nowrap;line-height:12px;color:#e6e6e6;letter-spacing:0.000px;transform:scaleX(0.8990);transform-origin:0 0;">0.00</div>
<svg style="position:absolute;left:413px;top:260px" width="10" height="6"><polyline points="0.8,0.8 4.5,4.5 8.2,0.8" fill="none" stroke="#b0b0b0" stroke-width="1.1"/></svg>
<div style="position:absolute;left:226.5px;top:290.7px;font-family:'Liberation Sans', sans-serif;font-size:12px;font-weight:normal;white-space:nowrap;line-height:12px;color:#e0e0e0;letter-spacing:-0.006px;">Background color</div>
<div style="position:absolute;left:346px;top:284px;width:36px;height:24px;background:#232323;box-sizing:border-box;border:1px solid #939393"></div>
<div style="position:absolute;left:349px;top:287px;width:18px;height:18px;box-sizing:border-box;border:1px solid #777;background-color:#cbcbcb;background-image:linear-gradient(45deg,#fff 25%,transparent 25%,transparent 75%,#fff 75%),linear-gradient(45deg,#fff 25%,transparent 25%,transparent 75%,#fff 75%);background-size:8px 8px;background-position:0 0,4px 4px"></div>
<div style="position:absolute;left:371.7px;top:294.3px;width:0;height:0;border-left:3.5px solid transparent;border-right:3.5px solid transparent;border-top:4px solid #9a9a9a"></div>
<div style="position:absolute;left:226px;top:320px;width:14px;height:14px;background:#232323;box-sizing:border-box;border:1px solid #8a8a8a;border-radius:1px"></div>
<svg style="position:absolute;left:226px;top:320px" width="14" height="14"><polyline points="2.5,7.5 5.8,10.6 11.5,3.6" fill="none" stroke="#dadada" stroke-width="1.6"/></svg>
<div style="position:absolute;left:244.5px;top:321.5px;font-family:'Liberation Sans', sans-serif;font-size:12px;font-weight:normal;white-space:nowrap;line-height:12px;color:#e0e0e0;letter-spacing:0.000px;transform:scaleX(0.9544);transform-origin:0 0;">Use masking</div>
<svg style="position:absolute;left:316.4px;top:320.2px" width="16" height="16" viewBox="0 0 16 16"><circle cx="8" cy="8" r="6.6" fill="#45a3e3" stroke="#15324d" stroke-width="0.9"/><circle cx="8" cy="4.2" r="1.15" fill="#10243a"/><path d="M6.7,6.3 H8.8 V11 H9.8 V12.1 H6.3 V11 H7.3 V7.3 H6.7 Z" fill="#10243a"/></svg>
<div style="position:absolute;left:226px;top:347px;width:14px;height:14px;background:#232323;box-sizing:border-box;border:1px solid #8a8a8a;border-radius:1px"></div>
<div style="position:absolute;left:244px;top:348.0px;font-family:'Liberation Sans', sans-serif;font-size:12px;font-weight:normal;white-space:nowrap;line-height:12px;color:#e0e0e0;letter-spacing:-0.052px;">Draw up to and including the maximum scale in scale ranges</div>
<div style="position:absolute;left:226px;top:372px;width:14px;height:14px;background:#232323;box-sizing:border-box;border:1px solid #8a8a8a;border-radius:1px"></div>
<div style="position:absolute;left:244px;top:374.0px;font-family:'Liberation Sans', sans-serif;font-size:12px;font-weight:normal;white-space:nowrap;line-height:12px;color:#e0e0e0;letter-spacing:-0.035px;">Allow assignment of unique numeric IDs for sharing web layers</div>
<svg style="position:absolute;left:581.7px;top:372.3px" width="16" height="16" viewBox="0 0 16 16"><circle cx="8" cy="8" r="6.6" fill="#45a3e3" stroke="#15324d" stroke-width="0.9"/><circle cx="8" cy="4.2" r="1.15" fill="#10243a"/><path d="M6.7,6.3 H8.8 V11 H9.8 V12.1 H6.3 V11 H7.3 V7.3 H6.7 Z" fill="#10243a"/></svg>
<div style="position:absolute;left:553px;top:656px;width:70px;height:24px;background:#252525;box-sizing:border-box;border:1px solid #c8c8c8"></div>
<div style="position:absolute;left:633px;top:656px;width:70px;height:24px;background:#252525;box-sizing:border-box;border:1px solid #c8c8c8"></div>
<div style="position:absolute;left:713px;top:656px;width:70px;height:24px;background:#2d2d2d;box-sizing:border-box;border:1px solid #5c5c5c"></div>
<div style="position:absolute;left:580.4px;top:662.3px;font-family:'Liberation Sans', sans-serif;font-size:12px;font-weight:normal;white-space:nowrap;line-height:12px;color:#e6e6e6;letter-spacing:0.000px;transform:scaleX(0.8995);transform-origin:0 0;">OK</div>
<div style="position:absolute;left:650.3px;top:662.3px;font-family:'Liberation Sans', sans-serif;font-size:12px;font-weight:normal;white-space:nowrap;line-height:12px;color:#e6e6e6;letter-spacing:-0.243px;">Cancel</div>
<div style="position:absolute;left:733.3px;top:662.3px;font-family:'Liberation Sans', sans-serif;font-size:12px;font-weight:normal;white-space:nowrap;line-height:12px;color:#6c6c6c;letter-spacing:0.194px;">Apply</div>
<div style="position:absolute;left:812px;top:0px;width:348px;height:734px;background:#333333"></div>
<div style="position:absolute;left:816px;top:-13.5px;font-family:'Liberation Sans', sans-serif;font-size:15.5px;font-weight:normal;white-space:nowrap;line-height:15.5px;color:#e0e0e0;letter-spacing:0.000px;letter-spacing:-0.25px">Export Layout</div>
<div style="position:absolute;left:968.4px;top:10.3px;font-family:'Liberation Sans', sans-serif;font-size:14.5px;font-weight:normal;white-space:nowrap;line-height:14.5px;color:#d6d6d6;letter-spacing:-0.019px;">Inverted1</div>
<div style="position:absolute;left:817.5px;top:45.2px;font-family:'Liberation Sans', sans-serif;font-size:13.5px;font-weight:normal;white-space:nowrap;line-height:13.5px;color:#d6d6d6;letter-spacing:-0.053px;">Properties</div>
<svg style="position:absolute;left:822px;top:90.5px" width="9" height="6"><polyline points="1,1 4.5,4.5 8,1" fill="none" stroke="#bdbdbd" stroke-width="1.7"/></svg>
<div style="position:absolute;left:834.4px;top:88.0px;font-family:'Liberation Sans', sans-serif;font-size:13px;font-weight:normal;white-space:nowrap;line-height:13px;color:#e6e6e6;letter-spacing:0.000px;transform:scaleX(0.9354);transform-origin:0 0;-webkit-text-stroke:0.25px #e6e6e6">File</div>
<div style="position:absolute;left:826.4px;top:117.0px;font-family:'Liberation Sans', sans-serif;font-size:12px;font-weight:normal;white-space:nowrap;line-height:12px;color:#e0e0e0;letter-spacing:0.000px;transform:scaleX(0.9408);transform-origin:0 0;">File Type</div>
<div style="position:absolute;left:826px;top:134px;width:120px;height:22px;background:#212121;box-sizing:border-box;border:1px solid #8c8c8c"></div>
<div style="position:absolute;left:828.7px;top:140.0px;font-family:'Liberation Sans', sans-serif;font-size:12px;font-weight:normal;white-space:nowrap;line-height:12px;color:#ececec;letter-spacing:0.000px;transform:scaleX(0.7976);transform-origin:0 0;">JPEG</div>
<div style="position:absolute;left:936.0px;top:143.2px;width:0;height:0;border-left:2.5px solid transparent;border-right:2.5px solid transparent;border-top:3px solid #e6e6e6"></div>
<div style="position:absolute;left:826px;top:164.0px;font-family:'Liberation Sans', sans-serif;font-size:12px;font-weight:normal;white-space:nowrap;line-height:12px;color:#e0e0e0;letter-spacing:0.000px;">Name</div>
<div style="position:absolute;left:826px;top:181px;width:321px;height:21px;background:#212121;box-sizing:border-box;border:1px solid #8c8c8c"></div>
<div style="position:absolute;left:827px;top:182px;width:319px;height:19px;overflow:hidden"><div style="position:absolute;left:4px;top:3.5px;font-family:'Liberation Sans',sans-serif;font-size:12px;line-height:12px;color:#ececec;white-space:nowrap;letter-spacing:0px">C:\gis\Projects\Terrain\Terrain_Exports\Inverted\Inverted2.jpg</div></div>
<svg style="position:absolute;left:1154px;top:184.5px" width="10" height="14"><path d="M1.5,2 H5 L6,1 H10 V13 H1.5 Z" fill="#3b3520" stroke="#e2c548" stroke-width="1.4"/><path d="M4,13 L6,7 H10 V13 Z" fill="#e7c843"/></svg>
<div style="position:absolute;left:826px;top:209px;width:14px;height:14px;background:#262626;box-sizing:border-box;border:1px solid #7a7a7a;border-radius:2.5px"></div>
<div style="position:absolute;left:846.8px;top:209.8px;font-family:'Liberation Sans', sans-serif;font-size:12px;font-weight:normal;white-space:nowrap;line-height:12px;color:#e0e0e0;letter-spacing:0.000px;">Clip to graphics extent</div>
<div style="position:absolute;left:826px;top:231px;width:14px;height:14px;background:#262626;box-sizing:border-box;border:1px solid #7a7a7a;border-radius:2.5px"></div>
<svg style="position:absolute;left:826px;top:231px" width="14" height="14"><polyline points="2.5,7.5 5.8,10.6 11.5,3.6" fill="none" stroke="#dadada" stroke-width="2"/></svg>
<div style="position:absolute;left:846.8px;top:232.0px;font-family:'Liberation Sans', sans-serif;font-size:12px;font-weight:normal;white-space:nowrap;line-height:12px;color:#e0e0e0;letter-spacing:0.000px;">Show selection symbology</div>
<svg style="position:absolute;left:822px;top:270.5px" width="9" height="6"><polyline points="1,1 4.5,4.5 8,1" fill="none" stroke="#bdbdbd" stroke-width="1.7"/></svg>
<div style="position:absolute;left:834.4px;top:268.0px;font-family:'Liberation Sans', sans-serif;font-size:13px;font-weight:normal;white-space:nowrap;line-height:13px;color:#e6e6e6;letter-spacing:0.128px;-webkit-text-stroke:0.25px #e6e6e6">Compression</div>
<div style="position:absolute;left:826.4px;top:297.0px;font-family:'Liberation Sans', sans-serif;font-size:12px;font-weight:normal;white-space:nowrap;line-height:12px;color:#e0e0e0;letter-spacing:0.000px;">Quality</div>
<div style="position:absolute;left:826px;top:315.3px;font-family:'Liberation Sans', sans-serif;font-size:12px;font-weight:normal;white-space:nowrap;line-height:12px;color:#e0e0e0;letter-spacing:0.000px;">Low</div>
<div style="position:absolute;left:854px;top:319px;width:216px;height:3px;background:#747474"></div>
<div style="position:absolute;left:1072px;top:319px;width:75px;height:3px;background:#474747"></div>
<div style="position:absolute;left:1069px;top:315px;width:3px;height:11px;background:#7a7a7a"></div>
<div style="position:absolute;left:1151.2px;top:315.3px;font-family:'Liberation Sans', sans-serif;font-size:12px;font-weight:normal;white-space:nowrap;line-height:12px;color:#e0e0e0;letter-spacing:0.000px;">M</div>
<svg style="position:absolute;left:822px;top:359.5px" width="9" height="6"><polyline points="1,1 4.5,4.5 8,1" fill="none" stroke="#bdbdbd" stroke-width="1.7"/></svg>
<div style="position:absolute;left:834.4px;top:357.0px;font-family:'Liberation Sans', sans-serif;font-size:13px;font-weight:normal;white-space:nowrap;line-height:13px;color:#e6e6e6;letter-spacing:0.206px;-webkit-text-stroke:0.25px #e6e6e6">Resolution</div>
<div style="position:absolute;left:826px;top:384px;width:50px;height:21px;background:#212121;box-sizing:border-box;border:1px solid #8c8c8c"></div>
<div style="position:absolute;left:838.6px;top:388.5px;font-family:'Liberation Sans', sans-serif;font-size:12px;font-weight:normal;white-space:nowrap;line-height:12px;color:#ececec;letter-spacing:0.000px;transform:scaleX(0.8736);transform-origin:0 0;">100</div>
<svg style="position:absolute;left:862px;top:387px" width="10" height="17"><polyline points="1,5 4.6,1.5 8.2,5" fill="none" stroke="#b0b0b0" stroke-width="1.1"/><polyline points="1,11 4.6,14.5 8.2,11" fill="none" stroke="#b0b0b0" stroke-width="1.1"/></svg>
<div style="position:absolute;left:880.7px;top:388.5px;font-family:'Liberation Sans', sans-serif;font-size:12px;font-weight:normal;white-space:nowrap;line-height:12px;color:#e0e0e0;letter-spacing:0.000px;transform:scaleX(0.8493);transform-origin:0 0;">DPI</div>
<div style="position:absolute;left:826px;top:410.6px;font-family:'Liberation Sans', sans-serif;font-size:12px;font-weight:normal;white-space:nowrap;line-height:12px;color:#e0e0e0;letter-spacing:-0.222px;">Height: 13200 Width: 10200</div>
<svg style="position:absolute;left:822px;top:448.5px" width="9" height="6"><polyline points="1,1 4.5,4.5 8,1" fill="none" stroke="#bdbdbd" stroke-width="1.7"/></svg>
<div style="position:absolute;left:834.4px;top:446.0px;font-family:'Liberation Sans', sans-serif;font-size:13px;font-weight:normal;white-space:nowrap;line-height:13px;color:#e6e6e6;letter-spacing:-0.227px;-webkit-text-stroke:0.25px #e6e6e6">JPEG Settings</div>
<div style="position:absolute;left:826px;top:480px;width:14px;height:14px;background:#262626;box-sizing:border-box;border:1px solid #7a7a7a;border-radius:2.5px"></div>
<div style="position:absolute;left:846.2px;top:480.7px;font-family:'Liberation Sans', sans-serif;font-size:12px;font-weight:normal;white-space:nowrap;line-height:12px;color:#e0e0e0;letter-spacing:0.000px;">Write world file</div>
<div style="position:absolute;left:826px;top:504.6px;font-family:'Liberation Sans', sans-serif;font-size:12px;font-weight:normal;white-space:nowrap;line-height:12px;color:#e0e0e0;letter-spacing:0.000px;">Map frame</div>
<div style="position:absolute;left:931px;top:499px;width:229px;height:22px;background:#2b2b2b;box-sizing:border-box;border:1px solid #3c3c3c;border-right:none"></div>
<svg style="position:absolute;left:933px;top:502px" width="16" height="16" viewBox="0 0 16 16"><rect x="0.5" y="0.5" width="15" height="15" fill="#48a042" stroke="#3d4f3d"/><path d="M10.2,1 L15,1 L15,8.6 L11.2,8.6 L9,10.4 L8.6,15 L5.6,15 L5.8,11 L7.6,8.4 L9.6,5.8 Z" fill="#2a6ea6"/></svg>
<div style="position:absolute;left:954.4px;top:503.6px;font-family:'Liberation Sans', sans-serif;font-size:12px;font-weight:normal;white-space:nowrap;line-height:12px;color:#e0e0e0;letter-spacing:-0.184px;">Map Frame</div>
<div style="position:absolute;left:826px;top:531.3px;font-family:'Liberation Sans', sans-serif;font-size:12px;font-weight:normal;white-space:nowrap;line-height:12px;color:#e0e0e0;letter-spacing:0.000px;">Color depth</div>
<div style="position:absolute;left:930px;top:525px;width:120px;height:22px;background:#212121;box-sizing:border-box;border:1px solid #8c8c8c"></div>
<div style="position:absolute;left:933.3px;top:530.5px;font-family:'Liberation Sans', sans-serif;font-size:12px;font-weight:normal;white-space:nowrap;line-height:12px;color:#ececec;letter-spacing:0.000px;">24-bit True Color</div>
<div style="position:absolute;left:1039.9px;top:534.4px;width:0;height:0;border-left:2.5px solid transparent;border-right:2.5px solid transparent;border-top:3px solid #e6e6e6"></div></body></html>
